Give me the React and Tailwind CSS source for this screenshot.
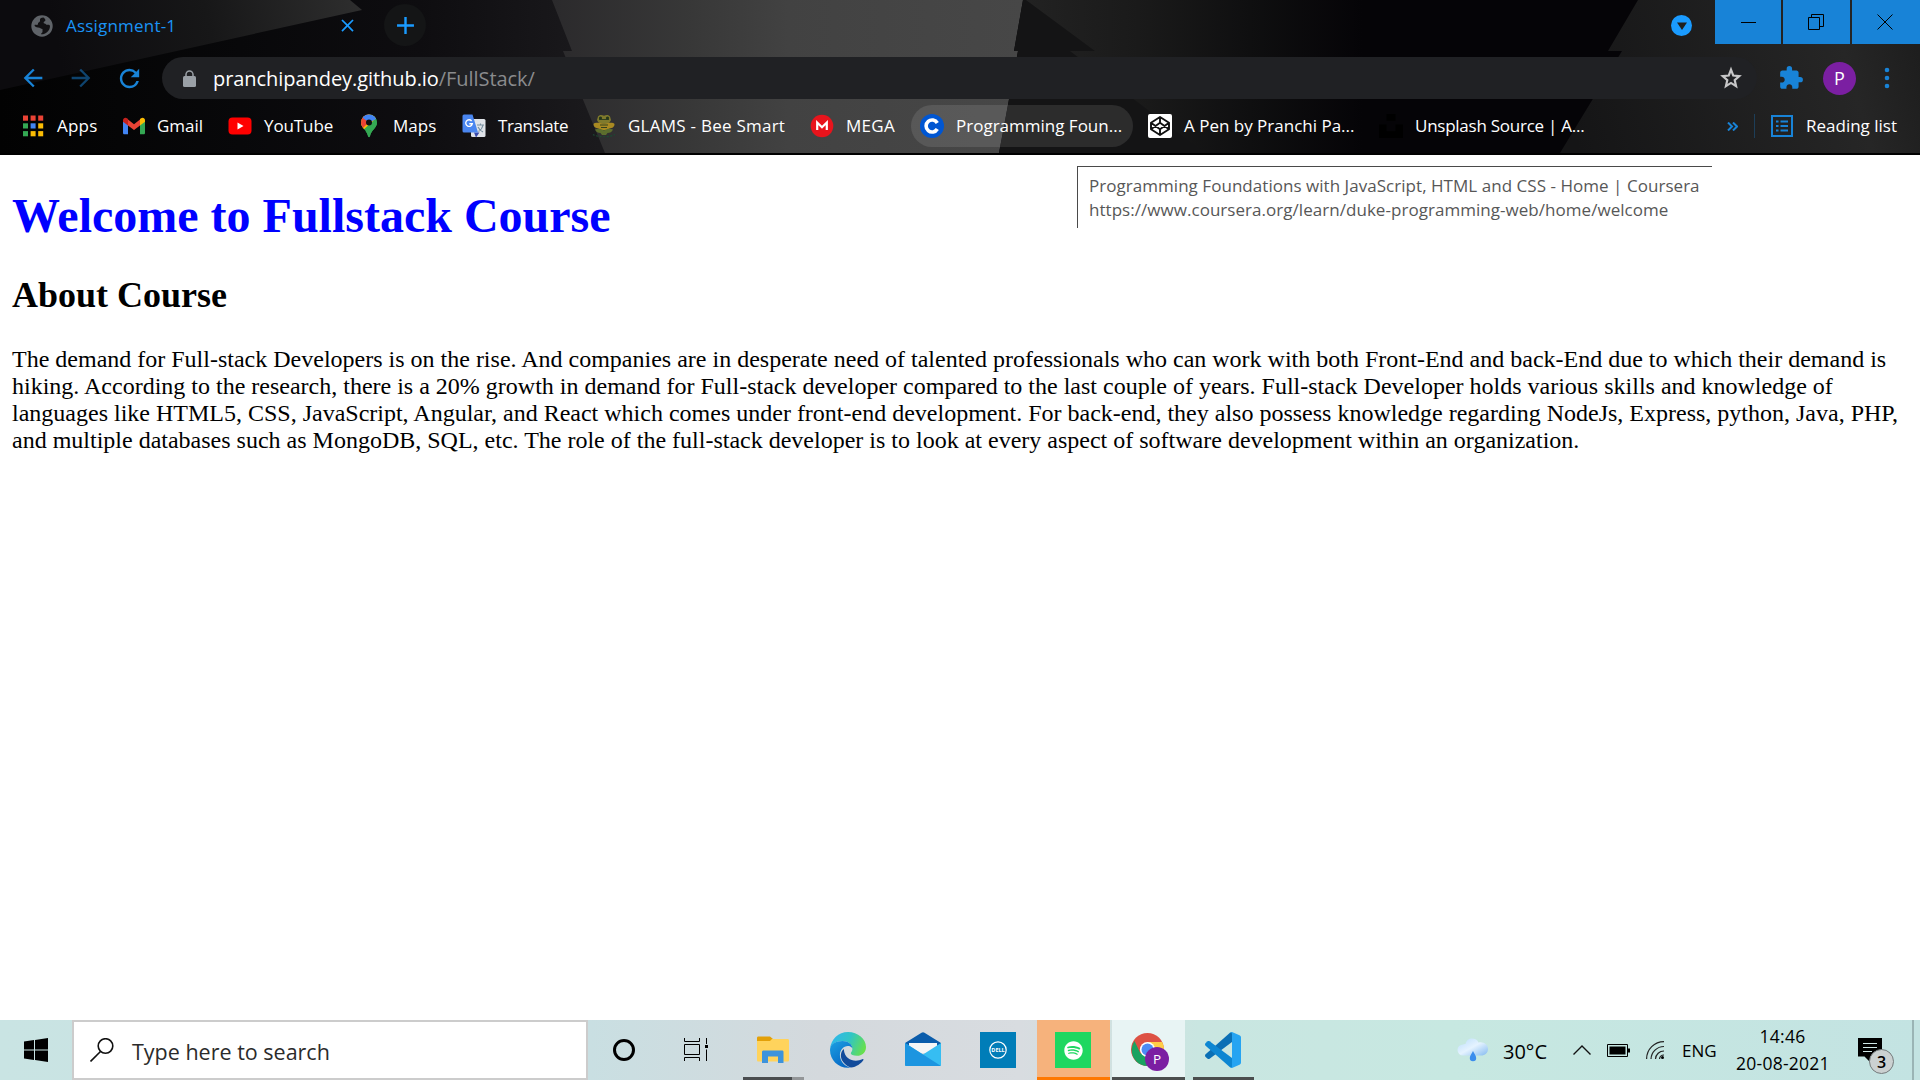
import React from "react";
import { MdArrowBack, MdArrowForward, MdRefresh, MdExtension, MdClose, MdAdd } from "react-icons/md";
import { FaSpotify } from "react-icons/fa";

function FrameArt() {
  return (
    <svg className="absolute inset-0 h-[155px] w-[1920px]" viewBox="0 0 1920 155" preserveAspectRatio="none">
      <defs>
        <linearGradient id="wedge" gradientUnits="userSpaceOnUse" x1="60" y1="60" x2="360" y2="0">
          <stop offset="0" stopColor="#0c0b0e" />
          <stop offset="0.5" stopColor="#171718" />
          <stop offset="1" stopColor="#2e2e2e" />
        </linearGradient>
        <linearGradient id="mid" gradientUnits="userSpaceOnUse" x1="552" x2="1023" y1="0" y2="0">
          <stop offset="0" stopColor="#2b2a2c" />
          <stop offset="0.3" stopColor="#383838" />
          <stop offset="0.5" stopColor="#424242" />
          <stop offset="1" stopColor="#474747" />
        </linearGradient>
        <linearGradient id="right" gradientUnits="userSpaceOnUse" x1="1026" x2="1400" y1="0" y2="0">
          <stop offset="0" stopColor="#222" />
          <stop offset="0.3" stopColor="#1a1a1a" />
          <stop offset="0.6" stopColor="#0f0f10" />
          <stop offset="0.9" stopColor="#050407" />
        </linearGradient>
        <linearGradient id="far" gradientUnits="userSpaceOnUse" x1="1580" x2="1920" y1="155" y2="60">
          <stop offset="0" stopColor="#151516" />
          <stop offset="0.8" stopColor="#262626" />
          <stop offset="1" stopColor="#1e1e1e" />
        </linearGradient>
        <linearGradient id="base" gradientUnits="userSpaceOnUse" x1="0" x2="600" y1="0" y2="0">
          <stop offset="0" stopColor="#020202" />
          <stop offset="0.4" stopColor="#08080a" />
          <stop offset="0.7" stopColor="#0e0d10" />
          <stop offset="1" stopColor="#1b1a1d" />
        </linearGradient>
      </defs>
      <rect width="1920" height="155" fill="#050407" />
      <rect width="610" height="155" fill="url(#base)" />
      <path d="M0 0H350L362 10L0 90Z" fill="url(#wedge)" />
      <path d="M552 0H1023L1014 51H1018L999 153H605L563 51H572Z" fill="url(#mid)" />
      <path d="M1023 0H1250V153H999L1018 51H1014Z" fill="#141415" />
      <path d="M1026 0H1400V153H1205L1070 51H1095Z" fill="url(#right)" />
      <path d="M1638 0H1920V153H1560L1622 51H1608Z" fill="url(#far)" />
      <rect y="153" width="1920" height="2" fill="#000" />
    </svg>
  );
}

function AppsIcon() {
  const colors = ["#ea4335", "#ea4335", "#ea4335", "#34a853", "#4285f4", "#fbbc04", "#34a853", "#fbbc04", "#fbbc04"];
  return (
    <svg viewBox="0 0 24 24" className="size-6">
      {colors.map((c, i) => (
        <rect key={i} x={2 + (i % 3) * 7.6} y={1.5 + Math.floor(i / 3) * 7.8} width="5" height="5.2" fill={c} />
      ))}
    </svg>
  );
}

function GmailIcon() {
  return (
    <svg viewBox="0 0 24 24" className="size-6">
      <path d="M2 6v13c0 .8.6 1.300 1.300 1.300H7V10z" fill="#4285f4" />
      <path d="M24 6v13c0 .8-.6 1.300-1.300 1.300H19V10z" fill="#34a853" />
      <path d="M7 5.500l6 4.700 6-4.700v6L13 16l-6-4.500z" fill="#ea4335" />
      <path d="M2 6.500C2 4 4.500 3 6.300 4.500L7 5.100v6.400L2 7.800z" fill="#c5221f" />
      <path d="M24 6.500C24 4 21.500 3 19.700 4.500l-.7.6v6.400l5-3.700z" fill="#fbbc04" />
    </svg>
  );
}

function YouTubeIcon() {
  return (
    <svg viewBox="0 0 24 24" className="size-6">
      <rect x="0.500" y="3.500" width="23" height="17" rx="4" fill="#f00" />
      <path d="M9.500 8.500l6 3.500-6 3.500z" fill="#fff" />
    </svg>
  );
}

function MapsIcon() {
  return (
    <svg viewBox="0 0 24 24" className="size-6">
      <clipPath id="pin"><path d="M12 .5a8 8 0 0 0-8 8c0 5.500 5.500 7 7 13.500.3 1.500 1.700 1.500 2 0C14.500 15.500 20 14 20 8.500a8 8 0 0 0-8-8z" /></clipPath>
      <g clipPath="url(#pin)">
        <rect width="24" height="24" fill="#34a853" />
        <path d="M0 0h24L5 17 0 20z" fill="#fbbc04" />
        <path d="M0 0h12l0 8-6 6-6-3z" fill="#ea4335" />
        <path d="M5 0h19v3L12 8.500 6 4z" fill="#4285f4" />
        <path d="M24 2l-8 5 0 4-10 8 6 5h12z" fill="#34a853" />
      </g>
      <circle cx="12" cy="8.500" r="3" fill="#111" />
    </svg>
  );
}

function TranslateIcon() {
  return (
    <svg viewBox="0 0 24 24" className="size-6">
      <rect x="9" y="5" width="14.500" height="18" rx="1.500" fill="#dfe3e8" />
      <path d="M12 18.500h5.500L14 23.500z" fill="#3949ab" />
      <path d="M2 .5h8.500l5.500 18H2A1.500 1.500 0 0 1 .5 17V2A1.500 1.500 0 0 1 2 .5z" fill="#4a86f0" />
      <path d="M9.600 7A3.300 3.300 0 1 0 10.300 9.700H7.300" fill="none" stroke="#fff" strokeWidth="1.400" />
      <path d="M15 11h7M18.500 9.500V11M21 11c-.5 2.500-2 5-4.500 6.500M16 13c1 2 3 4 5 5" fill="none" stroke="#7890a0" strokeWidth="1.100" />
    </svg>
  );
}

function BeeIcon() {
  return (
    <svg viewBox="0 0 24 24" className="size-6">
      <path d="M6 2.500c1-2 4-2 6-.8 2-1.200 5-1.200 6 .8l1 3.500c-1 3-4 4-7 4s-6-1-7-4z" fill="#7f7a2c" />
      <path d="M1.500 10c2-2 6-1 10.500 0 4.500-1 8.500-2 10.500 0 0 3-2 4-5 4.500l-2 1.500h-7l-2-1.500c-3-.5-5-1.500-5-4.500z" fill="#a98a22" />
      <path d="M3 15.500c3-1.500 6-1 9 1 3-2 6-2.500 9-1-1 2.500-3 3.500-5.500 3.500l-1.500 2h-4l-1.500-2c-2.500 0-4.500-1-5.500-3.500z" fill="#5c6d2d" />
      <path d="M8 11h8M9 13.500h6M7 5.500h10" stroke="#33421f" strokeWidth="1" />
      <circle cx="8.500" cy="4" r="1.600" fill="#24371c" /><circle cx="15.500" cy="4" r="1.600" fill="#24371c" />
      <path d="M1 20.500c5 3 17 3 22 0" fill="none" stroke="#1c4a33" strokeWidth="1.200" strokeDasharray="2 1.500" />
    </svg>
  );
}

function MegaIcon() {
  return (
    <svg viewBox="0 0 24 24" className="size-6">
      <circle cx="12" cy="12" r="11.300" fill="#e8141c" />
      <path d="M7.200 16V8.500l4.800 4.700 4.800-4.700V16" fill="none" stroke="#fff" strokeWidth="2.200" />
    </svg>
  );
}

function CourseraIcon() {
  return (
    <svg viewBox="0 0 24 24" className="size-6">
      <circle cx="12" cy="12" r="12" fill="#0056d2" />
      <path d="M17.300 15A6 6 0 1 1 17.300 9" fill="none" stroke="#fff" strokeWidth="3.600" />
    </svg>
  );
}

function CodePenIcon() {
  return (
    <svg viewBox="0 0 24 24" className="size-6">
      <rect width="24" height="24" rx="2" fill="#fff" />
      <path d="M12 3l9 5.800v6.400L12 21l-9-5.800V8.800zM12 3v5.500M12 21v-5.500M3 8.800l9 6.400 9-6.400M3 15.200l9-6.400 9 6.400" fill="none" stroke="#111" strokeWidth="1.900" strokeLinejoin="round" />
    </svg>
  );
}

function UnsplashIcon() {
  return (
    <svg viewBox="0 0 24 24" className="size-6"><path d="M7.500 0h9v6.800h-9zM0 10.500h7.500v6.800h9v-6.800H24V24H0z" fill="#000" /></svg>
  );
}

function Bookmark({ icon, label, className }) {
  return (
    <div className={"flex h-[42px] shrink-0 items-center gap-3 whitespace-nowrap " + className}>
      {icon}
      <span>{label}</span>
    </div>
  );
}

function Browser() {
  return (
    <header className="relative h-[155px] overflow-hidden text-[17px] text-white">
      <FrameArt />
      <div className="relative flex h-[51px] items-start">
        <div className="flex h-[51px] w-[375px] items-center pl-[31px]">
          <svg viewBox="0 0 22 22" className="size-[22px]">
            <circle cx="11" cy="11" r="10.700" fill="#5f6368" />
            <path d="M12.500 2.500c-2.500 0-4 1-3.500 3 .4 1.700-2 1.500-2 3.500 0 1.500-2 .5-3.500 1 0 1.500 1.500 2.500 3.500 2.500 2.500 0 2.500 1.500 4.500 1.500v3c0 1-1.500 1-1.500 2.300 4 .4 9-3 9-8.300 0-.8-1-1.500-2.500-1.200-1.500.3-1.500-1.300-3-1.300-1.200 0-1.200-1.800.3-2.300 1-.4 1-2.200-1.300-3.700z" fill="#121113" />
          </svg>
          <span className="ml-[13px] w-[271px] tracking-[0.2px] text-[#1a93f5]">Assignment-1</span>
          <MdClose className="size-[21px] shrink-0 text-[#1a9bff]" />
        </div>
        <div className="ml-[9px] mt-1 flex size-[42px] items-center justify-center rounded-full bg-[#141516]">
          <MdAdd className="size-[29px] text-[#1a9bff]" />
        </div>
        <div className="ml-auto mr-[23px] mt-[15px] flex size-[21px] items-center justify-center rounded-full bg-[#1a9bff]">
          <svg viewBox="0 0 10 8" className="h-2 w-2.5"><path d="M0 .5h10L5 8z" fill="#202020" /></svg>
        </div>
        <div className="flex h-11 w-[205px] gap-0.5 text-black">
          <div className="flex flex-1 items-center justify-center bg-[#1883d7]"><div className="h-px w-[15px] bg-black" /></div>
          <div className="flex flex-1 items-center justify-center bg-[#1883d7] pr-px">
            <svg viewBox="0 0 16 16" className="size-4" fill="none" stroke="#000"><path d="M.5 3.500h11v12H.5zM3.500 3.500v-3h12v12h-4" /></svg>
          </div>
          <div className="flex flex-1 items-center justify-center bg-[#1883d7] pr-0.5">
            <svg viewBox="0 0 16 16" className="size-4" stroke="#000"><path d="M.5.5l15 15M15.500.5l-15 15" /></svg>
          </div>
        </div>
      </div>
      <div className="relative flex h-[54px] items-center text-[#1883d7]">
        <MdArrowBack className="ml-[19px] size-[28px]" />
        <MdArrowForward className="ml-5 size-[28px] opacity-50" />
        <MdRefresh className="ml-5 size-[29px]" />
        <div className="ml-[18px] flex h-[42px] w-[1595px] items-center rounded-full bg-[#202124] pl-[21px] pr-[13px]">
          <svg viewBox="0 0 13 17" className="h-[17px] w-[13px]"><path d="M3 7V4.500a3.500 3.500 0 0 1 7 0V7" fill="none" stroke="#9aa0a6" strokeWidth="1.500" /><rect y="6" width="13" height="11" rx="1.500" fill="#9aa0a6" /></svg>
          <div className="ml-[17px] pt-px text-[20px] tracking-[-0.060px] text-white">pranchipandey.github.io<span className="text-[#8a8b8d]">/FullStack/</span></div>
          <svg viewBox="0 0 24 24" className="ml-auto size-[26px]" fill="none" stroke="#c7c7c8" strokeWidth="2"><path d="M12 4.300l2.050 5.400 5.600.5-4.250 3.700 1.300 5.600-4.700-2.950-4.700 2.950 1.300-5.600-4.250-3.700 5.600-.5z" /></svg>
        </div>
        <MdExtension className="ml-[21px] size-[26px]" />
        <div className="ml-[19px] flex size-[33px] items-center justify-center rounded-full bg-[#7b1fa2] text-[18px] text-white">P</div>
        <svg viewBox="0 0 6 22" className="ml-[28px] h-[22px] w-[6px]" fill="currentColor"><circle cx="3" cy="3" r="2.300" /><circle cx="3" cy="11" r="2.300" /><circle cx="3" cy="19" r="2.300" /></svg>
      </div>
      <div className="relative flex h-[42px] items-center pl-[21px]">
        <Bookmark className="w-[100px] tracking-[0.2px]" icon={<AppsIcon />} label="Apps" />
        <Bookmark className="w-[107px]" icon={<GmailIcon />} label="Gmail" />
        <Bookmark className="w-[129px] tracking-[-0.1px]" icon={<YouTubeIcon />} label="YouTube" />
        <Bookmark className="w-[105px]" icon={<MapsIcon />} label="Maps" />
        <Bookmark className="w-[130px] tracking-[-0.4px]" icon={<TranslateIcon />} label="Translate" />
        <Bookmark className="w-[218px] tracking-[0.250px]" icon={<BeeIcon />} label="GLAMS - Bee Smart" />
        <Bookmark className="w-[101px] tracking-[0.3px]" icon={<MegaIcon />} label="MEGA" />
        <Bookmark className="mr-[15px] w-[222px] rounded-full bg-white/10 pl-[9px]" icon={<CourseraIcon />} label="Programming Foun..." />
        <Bookmark className="w-[231px]" icon={<CodePenIcon />} label="A Pen by Pranchi Pa..." />
        <Bookmark className="w-[348px] tracking-[-0.250px]" icon={<UnsplashIcon />} label="Unsplash Source | A..." />
        <svg viewBox="0 0 11 9" className="h-[9px] w-[11px]" fill="none" stroke="#1883d7" strokeWidth="2"><path d="M1 .5l4 4-4 4M6 .5l4 4-4 4" /></svg>
        <div className="ml-4 h-6 w-px bg-[#1d3e58]" />
        <svg viewBox="0 0 22 22" className="ml-4 size-[22px]" fill="none" stroke="#1883d7" strokeWidth="2"><path d="M1 1h20v20H1zM5 6.500h2.500M9.500 6.500H17M5 11h2.500M9.500 11H17M5 15.500h2.500M9.500 15.500H17" /></svg>
        <span className="ml-[13px] whitespace-nowrap">Reading list</span>
      </div>
    </header>
  );
}

function Explorer() {
  return (
    <svg viewBox="0 0 32 28" className="h-7 w-8">
      <path d="M0 2C0 1 .5.500 1.500.500H13l3 2.500-2 3H0z" fill="#e3a008" />
      <path d="M0 5h13l2-2h15.500c1 0 1.500.5 1.500 1.500V24c0 1-.5 1.500-1.500 1.500h-29C.5 25.500 0 25 0 24z" fill="#ffd35c" />
      <path d="M5 27V16c0-1 .7-1.500 1.500-1.500h18.500c1 0 1.500.5 1.500 1.500v11h-5.500v-6.500H11V27z" fill="#3c93dc" />
    </svg>
  );
}

function EdgeIcon() {
  return (
    <svg viewBox="0 0 36 36" className="size-9">
      <defs>
        <linearGradient id="eg" x1="0" x2="1" y1="0.3" y2="0.6"><stop offset="0" stopColor="#2fb6ee" /><stop offset="0.5" stopColor="#31c5c5" /><stop offset="1" stopColor="#68e04b" /></linearGradient>
        <linearGradient id="eb" x1="0" x2="0.6" y1="0" y2="1"><stop offset="0" stopColor="#1da0e2" /><stop offset="1" stopColor="#0667c5" /></linearGradient>
      </defs>
      <path d="M0 17C1 7 8.500 0 18 0c10 0 18 7 18 15 0 5.500-4 8.800-9 8.800-4 0-6.200-1.300-6.200-2.600 0-1 1.600-1.600 1.600-4.200C22.400 12.500 18 9 12.500 9 6 9 1 12.500 0 17z" fill="url(#eg)" />
      <path d="M0 18C0 12 6 9 12.500 9c5.500 0 9.900 3.500 9.900 7.500-1-2-3-2.500-4.500-2.500-4.500 0-8 4-8 9 0 7 6 12 11.100 12.600C10 37.500 0 29 0 18z" fill="url(#eb)" />
      <path d="M13.800 17C9 21 9.500 31 21 35.600c5.500-.8 10-4 12.300-7.400.5-.8-.2-1.400-1-.9C26 30.500 14.500 29 13.800 17z" fill="#124b9b" />
    </svg>
  );
}

function MailIcon() {
  return (
    <svg viewBox="0 0 36 36" className="size-9">
      <path d="M0 11L16.500.7c1-.7 2-.7 3 0L36 11v10H0z" fill="#0a5cab" />
      <path d="M4 11h28v10H4z" fill="#f4f5f6" />
      <path d="M0 11l18 11.500L36 11v21.500c0 1-.5 1.500-1.500 1.500h-33C.5 34 0 33.500 0 32.500z" fill="#36bdf2" />
      <path d="M0 11l36 23H1.500C.5 34 0 33.500 0 32.500z" fill="#1c95e0" />
    </svg>
  );
}

function ChromeIcon() {
  return (
    <svg viewBox="0 0 38 38" className="size-[38px]">
      <circle cx="16.500" cy="16.500" r="16.500" fill="#dd5144" />
      <path d="M3.500 8C-4 20 5 33 16.500 33l7-12.500-14 0z" fill="#1aa260" />
      <path d="M16.500 9h14.700A16.500 16.500 0 0 1 16.500 33L23 20z" fill="#ffcd46" />
      <circle cx="16.500" cy="16.500" r="7.600" fill="#fff" /><circle cx="16.500" cy="16.500" r="6" fill="#4c8bf5" />
      <circle cx="26" cy="26" r="12" fill="#7b1fa2" />
      <text x="26" y="31" textAnchor="middle" fontSize="13.500" fill="#fff">P</text>
    </svg>
  );
}

function CodeIcon() {
  return (
    <svg viewBox="0 0 36 36" className="size-9">
      <path d="M0 23.500c0 .6.200 1 .6 1.400l2 1.800c.6.5 1.300.5 2 0L27 10V0c-.7 0-1.300.2-2 .8L.6 22.300c-.4.4-.6.8-.6 1.200z" fill="#0a6fb5" />
      <path d="M0 12.500c0-.6.200-1 .6-1.400l2-1.800c.6-.5 1.300-.5 2 0L27 26v10c-.7 0-1.300-.2-2-.8L.6 13.700c-.4-.4-.6-.8-.6-1.200z" fill="#0d86d2" />
      <path d="M27 0l7.500 3.300c1 .5 1.500 1.200 1.500 2.200v25c0 1-.5 1.700-1.500 2.200L27 36c-.7 0-1.300-.2-2-.8 1 .5 2 0 2-1V2c0-1-1-1.700-2-1.200.7-.6 1.300-.8 2-.8z" fill="#26a4f2" />
    </svg>
  );
}

function Weather() {
  return (
    <svg viewBox="0 0 31 24" className="h-6 w-[31px]">
      <defs><linearGradient id="cl" x1="0" x2="1" y1="0" y2="1"><stop offset="0" stopColor="#b9ddfb" /><stop offset="0.5" stopColor="#e5f3ff" /><stop offset="1" stopColor="#84baf0" /></linearGradient></defs>
      <path d="M6 17.500a5.500 5.500 0 0 1 0-11 3 3 0 0 1 2.500-.5C9.500 2 12 .5 15 .5S20.500 2 21.500 4.500c5-1 9.500 2 9.500 6.500 0 4-3 6.500-7 6.500z" fill="url(#cl)" />
      <path d="M16 13c1 2.500 3.200 4.500 3.200 7a3.200 3.200 0 0 1-6.400 0c0-2.500 2.200-4.500 3.200-7z" fill="#3b8ded" />
    </svg>
  );
}

function Taskbar() {
  return (
    <footer className="flex h-[60px] items-center bg-[linear-gradient(90deg,#c9e4e3_0px,#c9dfe2_590px,#d4d9dd_820px,#d8dce0_1020px,#c9e6e1_1200px,#c7e8e1_1450px,#c3e3e2_1920px)] text-black">
      <div className="flex h-full w-[72px] items-center justify-center">
        <svg viewBox="0 0 24 24" className="size-6"><path d="M0 3.500l10-1.400v9.400H0zM11 2l13-2v11.500H11zM0 12.500h10v9.400L0 20.500zM11 12.500h13V24l-13-2z" /></svg>
      </div>
      <div className="flex h-[60px] w-[516px] items-center border-2 border-[#ccc] bg-white pl-4">
        <svg viewBox="0 0 24 24" className="size-6" fill="none" stroke="#111" strokeWidth="1.600"><circle cx="15.500" cy="8" r="7.300" /><path d="M10.500 13.500L.5 23.500" /></svg>
        <span className="ml-[18px] pt-1 text-[21.500px] text-[#2b2b2b]">Type here to search</span>
      </div>
      <div className="flex h-full w-[72px] items-center justify-center">
        <div className="size-[22px] rounded-full border-[3px] border-black" />
      </div>
      <div className="flex h-full w-[72px] items-center justify-center">
        <svg viewBox="0 0 24 24" className="size-6" fill="none" stroke="#000"><path d="M.5 0v3.500h15V0M.5 6.500h15v10H.5zM.5 23v-3.500h15V23M22.500 0v6M22.500 11.500V23" /><path d="M21 7h3v3h-3z" fill="#000" stroke="none" /></svg>
      </div>
      <div className="ml-[11px] flex h-full w-[61px] flex-col">
        <div className="flex grow items-center pl-3.5 pt-[3px]"><Explorer /></div>
        <div className="flex h-[3px]"><div className="w-[49px] bg-[#4a4d4f]" /><div className="w-3 bg-[#939698]" /></div>
      </div>
      <div className="ml-[26px] w-[75px]"><EdgeIcon /></div>
      <div className="w-[75px]"><MailIcon /></div>
      <div className="w-[57px]">
        <div className="flex size-9 items-center justify-center bg-[#007db8]">
          <svg viewBox="0 0 18 18" className="size-[18px]"><circle cx="9" cy="9" r="8.200" fill="none" stroke="#fff" strokeWidth="1.200" /><text x="9" y="11" textAnchor="middle" fontSize="5.500" fontWeight="700" fill="#fff">DELL</text></svg>
        </div>
      </div>
      <div className="flex h-full w-[73px] items-center border-b-[3px] border-[#ff7800] bg-[#f6b27c] pl-[18px] pt-[3px]">
        <div className="flex size-9 items-center justify-center bg-[#1ed760]"><FaSpotify className="size-[19px] text-white" /></div>
      </div>
      <div className="ml-0.5 flex h-full w-[73px] border-b-[3px] border-[#4b4e4e] bg-[#e8f4f4] pl-[19px] pt-[13px]"><ChromeIcon /></div>
      <div className="ml-2 flex h-full w-[61px] items-center border-b-[3px] border-[#4b4e4e] pl-3 pt-[3px]"><CodeIcon /></div>
      <div className="ml-[203px] w-[46px]"><Weather /></div>
      <span className="w-[70px] pt-1 text-[20px]">30°C</span>
      <svg viewBox="0 0 18 10" className="h-2.5 w-[18px]" fill="none" stroke="#111" strokeWidth="1.400"><path d="M.5 9.500L9 1l8.500 8.500" /></svg>
      <svg viewBox="0 0 23 13" className="ml-4 h-[13px] w-[23px]"><path d="M.5.5h20v12H.5z" fill="none" stroke="#000" /><path d="M2.500 2.500h16v8h-16zM21 4.500h2v4h-2z" /></svg>
      <svg viewBox="0 0 18 18" className="ml-4 size-[18px]" fill="none" stroke="#222" strokeWidth="1.200"><path d="M.6 18A17.400 17.400 0 0 1 18 .6M5 18A13 13 0 0 1 18 5.500M9.500 18A8.500 8.500 0 0 1 18 10M13.500 18A4.500 4.500 0 0 1 18 14" /><circle cx="16.500" cy="16.500" r="1.500" fill="#000" stroke="none" /></svg>
      <span className="ml-[18px] w-[54px] pt-0.5 text-[17px]">ENG</span>
      <div className="w-[93px] text-center text-[17.500px] leading-[27px] tracking-[0.250px]"><div>14:46</div><div className="whitespace-nowrap">20-08-2021</div></div>
      <div className="relative ml-[29px] size-6">
        <svg viewBox="0 0 24 24" className="size-6"><path d="M0 0h24v18.500H12V24l-5.500-5.500H0z" /><path d="M5 5.500h14M5 9.500h14M5 13.500h9" stroke="#cfe7e6" strokeWidth="1.200" /></svg>
        <div className="absolute left-[11px] top-[11px] flex size-[25px] items-center justify-center rounded-full border border-[#747b7c] bg-[#cbd1d1] text-[16px] font-semibold">3</div>
      </div>
      <div className="ml-auto mr-1.5 h-full w-0.5 bg-[#9ab4b5]" />
    </footer>
  );
}

export default function App() {
  return (
    <div className="flex h-[1080px] w-[1920px] flex-col overflow-hidden bg-white font-['Open_Sans','Noto_Sans',sans-serif]">
      <Browser />
      <main className="relative grow whitespace-nowrap pl-3 font-['Liberation_Serif',serif] text-black">
        <h1 className="pt-[33px] text-[48px] font-bold leading-[55px] text-[#00f]">Welcome to Fullstack Course</h1>
        <h2 className="mt-[32px] text-[36px] font-bold leading-[41px]">About Course</h2>
        <p className="mt-[30px] text-[24px] leading-[27px]">
          The demand for Full-stack Developers is on the rise. And companies are in desperate need of talented professionals who can work with both Front-End and back-End due to which their demand is<br />
          hiking. According to the research, there is a 20% growth in demand for Full-stack developer compared to the last couple of years. Full-stack Developer holds various skills and knowledge of<br />
          languages like HTML5, CSS, JavaScript, Angular, and React which comes under front-end development. For back-end, they also possess knowledge regarding NodeJs, Express, python, Java, PHP,<br />
          and multiple databases such as MongoDB, SQL, etc. The role of the full-stack developer is to look at every aspect of software development within an organization.
        </p>
        <div className="absolute left-[1077px] top-[11px] h-[62px] w-[635px] border-l border-t border-[#4a4a4a] bg-white pl-[11px] pt-[7px] font-['Open_Sans','Noto_Sans',sans-serif] text-[17px] leading-6 tracking-[0.040px] text-[#575757]">
          <div>Programming Foundations with JavaScript, HTML and CSS - Home | Coursera</div>
          <div>https://www.coursera.org/learn/duke-programming-web/home/welcome</div>
        </div>
      </main>
      <Taskbar />
    </div>
  );
}
